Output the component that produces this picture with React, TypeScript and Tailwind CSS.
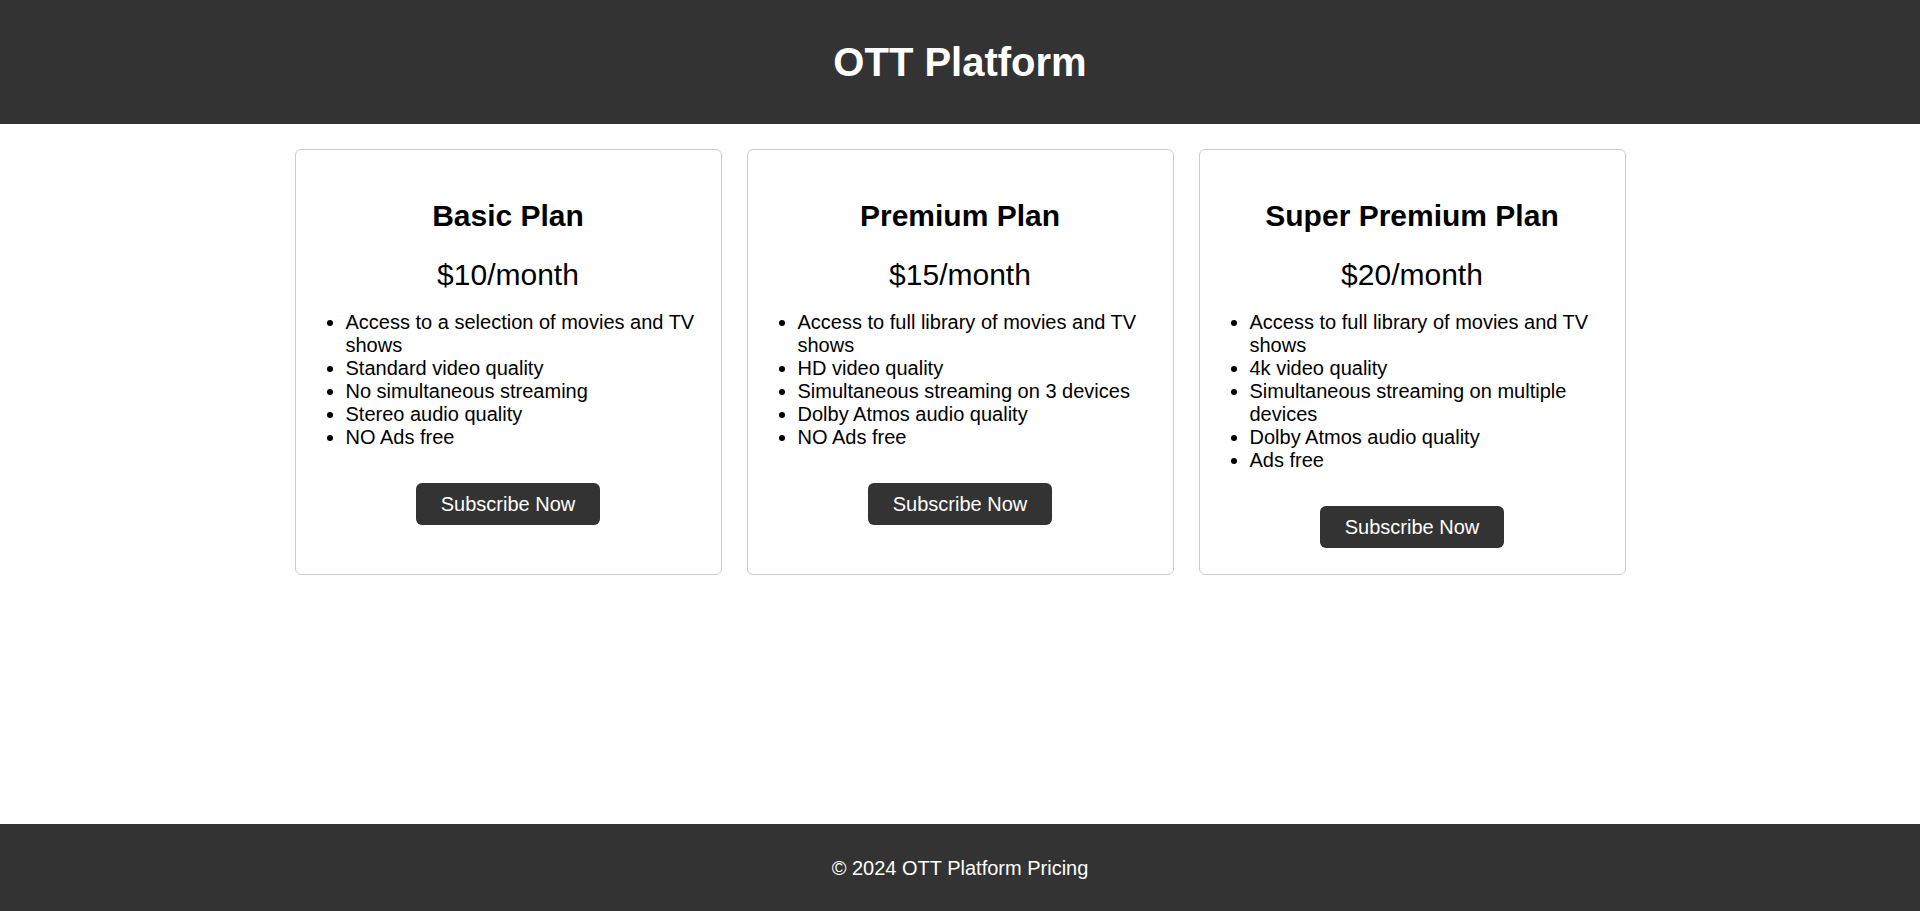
import React from "react";

const plans = [
  {
    name: "Basic Plan",
    price: "$10/month",
    features: [
      "Access to a selection of movies and TV shows",
      "Standard video quality",
      "No simultaneous streaming",
      "Stereo audio quality",
      "NO Ads free",
    ],
  },
  {
    name: "Premium Plan",
    price: "$15/month",
    features: [
      "Access to full library of movies and TV shows",
      "HD video quality",
      "Simultaneous streaming on 3 devices",
      "Dolby Atmos audio quality",
      "NO Ads free",
    ],
  },
  {
    name: "Super Premium Plan",
    price: "$20/month",
    features: [
      "Access to full library of movies and TV shows",
      "4k video quality",
      "Simultaneous streaming on multiple devices",
      "Dolby Atmos audio quality",
      "Ads free",
    ],
  },
];

export default function App() {
  return (
    <div
      className="min-h-screen flex flex-col bg-white text-black"
      style={{ fontFamily: '"Liberation Sans", Arial, sans-serif' }}
    >
      <header className="bg-[#333333] text-white h-[124px] flex items-center justify-center">
        <h1 className="text-[40px] font-bold leading-[46px]">OTT Platform</h1>
      </header>
      <main className="flex-1 pt-[25px]">
        <div className="flex justify-center items-stretch gap-[25px]">
          {plans.map((p) => (
            <div
              key={p.name}
              className="w-[427px] border border-[#cccccc] rounded-[6px] px-[25px] pb-[26px] pt-[25px] flex flex-col items-center"
            >
              <h2 className="mt-[24px] text-[30px] font-bold leading-[34px] text-center">
                {p.name}
              </h2>
              <p className="mt-[25px] text-[30px] leading-[34px] text-center">{p.price}</p>
              <ul className="mt-[19px] self-stretch list-disc pl-[25px] text-[20px] leading-[23px] text-left">
                {p.features.map((f) => (
                  <li key={f}>{f}</li>
                ))}
              </ul>
              <button className="mt-[34px] bg-[#333333] text-white text-[20px] leading-[23px] h-[42px] px-[25px] rounded-[6px]">
                Subscribe Now
              </button>
            </div>
          ))}
        </div>
      </main>
      <footer className="bg-[#333333] text-white h-[87px] flex items-center justify-center">
        <p className="text-[20px] leading-[23px] pt-[2px]">© 2024 OTT Platform Pricing</p>
      </footer>
    </div>
  );
}
